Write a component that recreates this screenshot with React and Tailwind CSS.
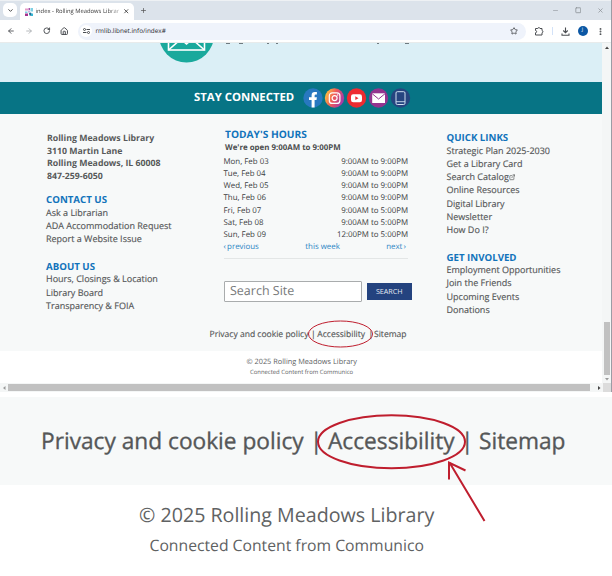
import React from "react";
import {
  ArrowLeft, ArrowRight, RotateCw, House, Star,
  EllipsisVertical, ChevronDown, X, Plus, Minus, Square, ExternalLink,
} from "lucide-react";

function TabStrip() {
  return (
    <div className="flex h-[20px] items-start bg-[#dce3eb] border-t border-[#eef1f4] pl-[3px] text-[#333]">
      <div className="mt-[2px] flex h-[14px] w-[14px] items-center justify-center rounded-[5px] bg-white">
        <ChevronDown size={7} strokeWidth={3} />
      </div>
      <div className="ml-[3px] mt-[2px] flex h-[17px] w-[114px] items-center rounded-t-[5px] bg-white pl-[4.500px]">
        <svg width="8" height="8" viewBox="0 0 8 8" className="shrink-0">
          <rect x="0" y="0.500" width="3" height="2" fill="#e79cc8" />
          <rect x="3.500" y="0" width="1.500" height="2" fill="#a44fa8" />
          <rect x="5.500" y="0" width="2.500" height="3.500" fill="#7fd0e4" />
          <rect x="0" y="3.500" width="2.500" height="1.500" fill="#7fd0e4" />
          <rect x="3" y="2.500" width="2" height="2" fill="#c9b5dc" />
          <rect x="0" y="5.500" width="3" height="2.500" fill="#a3328f" />
          <path d="M4 5 L6 4.500 L7.500 8 L4.500 7.500 Z" fill="#1d6f96" />
          <rect x="6" y="5.500" width="2" height="2.500" fill="#35b6d4" />
        </svg>
        <span className="ml-[3px] w-[84px] whitespace-nowrap bg-gradient-to-r from-[#333] from-85% to-[#bbb] bg-clip-text text-[5.850px] leading-[9px] text-transparent">
          index - Rolling Meadows Librar
        </span>
        <X size={6.500} strokeWidth={3} className="ml-[3px] shrink-0" />
      </div>
      <Plus size={7} strokeWidth={2.5} className="ml-[6px] mt-[6px] text-[#555]" />
      <div className="ml-auto mr-[7px] mt-[6px] flex items-center gap-[16px] text-[#8d9298]">
        <Minus size={7} strokeWidth={2} />
        <Square size={6.5} strokeWidth={3} />
        <X size={7} strokeWidth={2.5} />
      </div>
    </div>
  );
}

function Toolbar() {
  return (
    <div className="flex h-[22px] items-center bg-white pl-[7px] text-[#4a4d51]">
      <ArrowLeft size={8} strokeWidth={2.6} />
      <ArrowRight size={8} strokeWidth={2.4} className="ml-[10px] text-[#a5a8ac]" />
      <RotateCw size={7.5} strokeWidth={3} className="ml-[10px]" />
      <House size={8.5} strokeWidth={2.8} className="ml-[9.5px]" />
      <div className="ml-[9.5px] flex h-[17px] w-[448px] items-center rounded-full bg-[#eff3fb] pl-[2px]">
        <div className="flex h-[12px] w-[12px] items-center justify-center rounded-full bg-white">
          <svg width="7" height="6" viewBox="0 0 14 12" fill="none" stroke="currentColor" strokeWidth="2">
            <circle cx="3" cy="3" r="2" />
            <path d="M7 3 H14 M0 9 H7" />
            <circle cx="11" cy="9" r="2" />
          </svg>
        </div>
        <span className="ml-[3.500px] whitespace-nowrap text-[6.400px] leading-[10px] text-[#26282b]">
          rmlib.libnet.info/index#
        </span>
        <Star size={8} strokeWidth={2.6} className="ml-auto mr-[8px]" />
      </div>
      <svg width="10" height="10" viewBox="0 0 20 20" fill="none" stroke="currentColor" strokeWidth="2" strokeLinejoin="round" className="ml-[8px]">
        <path d="M3 5 H7.500 A2.300 2.300 0 0 1 12 5 H16 V9 A2.300 2.300 0 0 1 16 13.500 V18 H3 V13.500 A2.200 2.200 0 0 0 3 9 Z" />
      </svg>
      <div className="ml-[7.500px] h-[8px] w-[1.5px] bg-[#d3e2f8]" />
      <svg width="9" height="9" viewBox="0 0 18 18" fill="none" stroke="currentColor" strokeWidth="2.200" className="ml-[7.500px]">
        <path d="M9 1 V11 M4.500 7 L9 11.500 L13.500 7 M2 13 V16.500 H16 V13" />
      </svg>
      <div className="ml-[8px] flex h-[10px] w-[10px] items-center justify-center rounded-full bg-[#0b57a4] text-[5px] text-white">
        J
      </div>
      <EllipsisVertical size={9} strokeWidth={3} className="ml-[8px]" />
    </div>
  );
}

function Banner() {
  return (
    <div className="h-[39px] w-full overflow-hidden bg-[#dbeff6]">
      <svg width="602" height="39" viewBox="0 0 602 39">
        <circle cx="186.5" cy="-8" r="27.5" fill="#1aa99c" />
        <g fill="none" stroke="#fff" strokeWidth="1.6">
          <rect x="168.5" y="-14" width="36" height="21" />
          <path d="M168.5 7 L181 -4 M204.500 7 L192 -4 M176 -8 L186.500 1 L197 -8" />
        </g>
        <g fill="#6d7a80">
          <rect x="226" y="0" width="4" height="1" /><rect x="239" y="0" width="4" height="1" />
          <rect x="267" y="0" width="2" height="1" /><rect x="276" y="0" width="2" height="1" />
          <rect x="377" y="0" width="2" height="1" /><rect x="405" y="0" width="4" height="1" />
        </g>
      </svg>
    </div>
  );
}

function SocialIcons() {
  return (
    <svg width="108" height="20" viewBox="0 0 108 20">
      <defs>
        <linearGradient id="insta" x1="0" y1="0.3" x2="1" y2="0.7">
          <stop offset="0" stopColor="#fdc53d" />
          <stop offset="0.45" stopColor="#f0585a" />
          <stop offset="1" stopColor="#9a36b5" />
        </linearGradient>
      </defs>
      <circle cx="10" cy="10" r="9.7" fill="#2878c0" />
      <path d="M8.600 19.400 V12 H6 V9.200 H8.600 V7.200 Q8.600 3.900 11.800 3.900 H13.900 V6.500 H12.700 Q11.600 6.500 11.600 7.700 V9.200 H13.900 L13.500 12 H11.600 V19.400 Z" fill="#fff" />
      <circle cx="31.500" cy="10" r="9.700" fill="url(#insta)" />
      <rect x="26.300" y="4.800" width="10.600" height="10.600" rx="3" fill="none" stroke="#fff" strokeWidth="1.200" />
      <circle cx="31.600" cy="10.100" r="2.500" fill="none" stroke="#fff" strokeWidth="1.200" />
      <circle cx="34.700" cy="7" r="0.700" fill="#fff" />
      <circle cx="53.500" cy="10" r="9.700" fill="#ee2b31" />
      <rect x="48" y="6.200" width="11" height="8" rx="2.200" fill="#fff" />
      <path d="M52.300 8.300 L55.500 10.200 L52.300 12.100 Z" fill="#ee2b31" />
      <circle cx="75.500" cy="10" r="9.700" fill="#93348f" />
      <rect x="69.200" y="5.300" width="12.800" height="9.700" fill="#fff" />
      <path d="M69.200 5.700 L75.600 11 L82 5.700" fill="none" stroke="#93348f" strokeWidth="1" />
      <circle cx="97.500" cy="10" r="9.700" fill="#264580" />
      <rect x="93" y="3.700" width="9" height="12.800" rx="1.300" fill="none" stroke="#cfe0f0" strokeWidth="1" />
      <path d="M93 13.700 H102" stroke="#cfe0f0" strokeWidth="0.900" />
    </svg>
  );
}

function LinkGroup({ title, links, className = "" }) {
  return (
    <section className={className}>
      <h2 className="h-[12.500px] text-[9.700px] font-bold leading-[13.300px] text-[#1173bb]">{title}</h2>
      <ul className="mb-[0.800px]">
        {links.map((link) => (
          <li key={link} className="flex h-[13.300px] items-center text-[9px] leading-[13.300px] text-[#555758] [-webkit-text-stroke:0.150px_#555758]">
            {link}
            {link === "Search Catalog" && <ExternalLink size={6.500} strokeWidth={2.500} className="mt-[2px]" />}
          </li>
        ))}
      </ul>
    </section>
  );
}

const hours = [
  ["Mon, Feb 03", "9:00AM to 9:00PM"],
  ["Tue, Feb 04", "9:00AM to 9:00PM"],
  ["Wed, Feb 05", "9:00AM to 9:00PM"],
  ["Thu, Feb 06", "9:00AM to 9:00PM"],
  ["Fri, Feb 07", "9:00AM to 5:00PM"],
  ["Sat, Feb 08", "9:00AM to 5:00PM"],
  ["Sun, Feb 09", "12:00PM to 5:00PM"],
];

function Hours() {
  return (
    <div className="w-[188px]">
      <h2 className="ml-[1.500px] h-[14px] text-[10.200px] font-bold leading-[14px] text-[#1173bb]">TODAY'S HOURS</h2>
      <p className="ml-[1.500px] h-[14.800px] text-[7.900px] font-bold leading-[15px] text-[#4b4d4e]">We're open 9:00AM to 9:00PM</p>
      <div className="w-[184.500px] border-b border-[#e3e6e6] pb-[4.200px]">
        {hours.map(([day, time]) => (
          <div key={day} className="flex h-[12.230px] justify-between text-[7.900px] leading-[12.230px] text-[#3c3e3f]">
            <span>{day}</span>
            <span>{time}</span>
          </div>
        ))}
        <div className="flex h-[12px] justify-between pr-[2px] text-[7.900px] leading-[12px] text-[#2e86c5]">
          <span className="[word-spacing:-0.800px]">‹ previous</span>
          <span>this week</span>
          <span className="[word-spacing:-0.800px]">next ›</span>
        </div>
      </div>
      <div className="mt-[22px] flex items-center gap-[4.500px]">
        <div className="flex h-[21px] w-[138.500px] shrink-0 items-center rounded-[1px] border border-[#a9acad] bg-white pl-[5.500px] text-[12.500px] leading-none text-[#77797a]">
          Search Site
        </div>
        <button className="flex h-[17px] w-[45.500px] shrink-0 items-center justify-center bg-[#24437f] text-[7.200px] text-[#e3e8f2]">
          SEARCH
        </button>
      </div>
    </div>
  );
}

function VerticalScrollbar() {
  return (
    <div className="flex w-[9px] flex-col items-center bg-[#f4f6f6]">
      <svg width="8" height="10" viewBox="0 0 8 10" className="shrink-0"><path d="M2 6 L4 3.500 L6 6 Z" fill="#444" /></svg>
      <div className="mt-[269px] h-[53px] w-[6px] shrink-0 bg-[#c1c1c1]" />
      <svg width="8" height="8" viewBox="0 0 8 8" className="shrink-0"><path d="M2 3 L4 5.500 L6 3 Z" fill="#999" /></svg>
    </div>
  );
}

function HorizontalScrollbar() {
  return (
    <div className="flex h-[9px] items-center bg-[#f4f6f6]">
      <svg width="8" height="8" viewBox="0 0 8 8"><path d="M5.500 2 L3 4 L5.500 6 Z" fill="#999" /></svg>
      <div className="h-[7px] w-[582px] bg-[#c1c1c1]" />
      <svg width="12" height="8" viewBox="0 0 12 8"><path d="M8 2 L10.500 4 L8 6 Z" fill="#444" /></svg>
      <div className="ml-px h-full flex-1 bg-[#dcdcdc]" />
    </div>
  );
}

export default function App() {
  return (
    <main className="relative h-[576px] w-[612px] overflow-hidden bg-white font-['Open_Sans',sans-serif] [text-rendering:geometricPrecision]">
      <div className="h-[392px] border-r border-[#9b9ca5]">
        <TabStrip />
        <Toolbar />
        <div className="h-px bg-[#e8ebeb]" />
        <div className="flex h-[340px]">
          <div className="w-[602px] overflow-hidden">
            <Banner />
            <div className="flex h-[32px] items-center bg-[#077485] pl-[194px]">
              <span className="w-[108.500px] whitespace-nowrap text-[11.350px] font-bold leading-none text-white">STAY CONNECTED</span>
              <SocialIcons />
            </div>
            <div className="h-[236.500px] bg-[#f7f9f9]">
              <div className="flex h-[212px] whitespace-nowrap">
                <div className="ml-[46px] w-[177.500px] pt-[18px]">
                  <address className="ml-px text-[8.750px] font-bold not-italic leading-[12.600px] text-[#58595a]">
                    <p>Rolling Meadows Library</p>
                    <p>3110 Martin Lane</p>
                    <p>Rolling Meadows, IL 60008</p>
                    <p>847-259-6050</p>
                  </address>
                  <LinkGroup className="mt-[11px]" title="CONTACT US" links={["Ask a Librarian", "ADA Accommodation Request", "Report a Website Issue"]} />
                  <LinkGroup className="mt-[14px]" title="ABOUT US" links={["Hours, Closings & Location", "Library Board", "Transparency & FOIA"]} />
                </div>
                <div className="w-[223px] pt-[13px]">
                  <Hours />
                </div>
                <div className="pt-[17px]">
                  <LinkGroup title="QUICK LINKS" links={["Strategic Plan 2025-2030", "Get a Library Card", "Search Catalog", "Online Resources", "Digital Library", "Newsletter", "How Do I?"]} />
                  <LinkGroup className="mt-[14px]" title="GET INVOLVED" links={["Employment Opportunities", "Join the Friends", "Upcoming Events", "Donations"]} />
                </div>
              </div>
              <nav className="ml-[209.500px] flex h-[16px] items-center whitespace-nowrap text-[8.550px] text-[#555758] [-webkit-text-stroke:0.150px_#555758]">
                <span className="w-[101.500px]">Privacy and cookie policy</span>
                <span className="w-[6.300px]">|</span>
                <span className="w-[51.200px]">Accessibility</span>
                <span className="w-[5.500px]">|</span>
                <span>Sitemap</span>
              </nav>
            </div>
            <div className="whitespace-nowrap pt-[5.500px] text-[#606263]">
              <p className="ml-[246.500px] text-[7.350px] leading-[12px]">© 2025 Rolling Meadows Library</p>
              <p className="ml-[250px] text-[5.920px] leading-[9.500px]">Connected Content from Communico</p>
            </div>
          </div>
          <VerticalScrollbar />
        </div>
        <HorizontalScrollbar />
      </div>
      <div className="mt-[5px] h-[88px] bg-[#f7f9f9]">
        <div className="flex h-full items-center whitespace-nowrap pl-[41px] text-[22.700px] text-[#555758] [-webkit-text-stroke:0.350px_#555758]">
          <span className="w-[269px]">Privacy and cookie policy</span>
          <span className="w-[18px]">|</span>
          <span className="w-[133px]">Accessibility</span>
          <span className="w-[18px]">|</span>
          <span>Sitemap</span>
        </div>
      </div>
      <div className="whitespace-nowrap pt-[15px] text-[#606263]">
        <p className="ml-[139px] text-[19.650px] leading-[30px]">© 2025 Rolling Meadows Library</p>
        <p className="ml-[149.500px] text-[15.720px] leading-[30px]">Connected Content from Communico</p>
      </div>
      <svg className="pointer-events-none absolute left-0 top-0" width="612" height="576" viewBox="0 0 612 576" fill="none" stroke="#bf1e2e">
        <ellipse cx="340.500" cy="334" rx="32" ry="13" strokeWidth="1" />
        <ellipse cx="391.500" cy="441.700" rx="73.500" ry="26.500" strokeWidth="2" />
        <path d="M484.500 521 L449.500 462.500 M449 479.500 V462.500 L465.500 470.500" strokeWidth="2" />
      </svg>
    </main>
  );
}
